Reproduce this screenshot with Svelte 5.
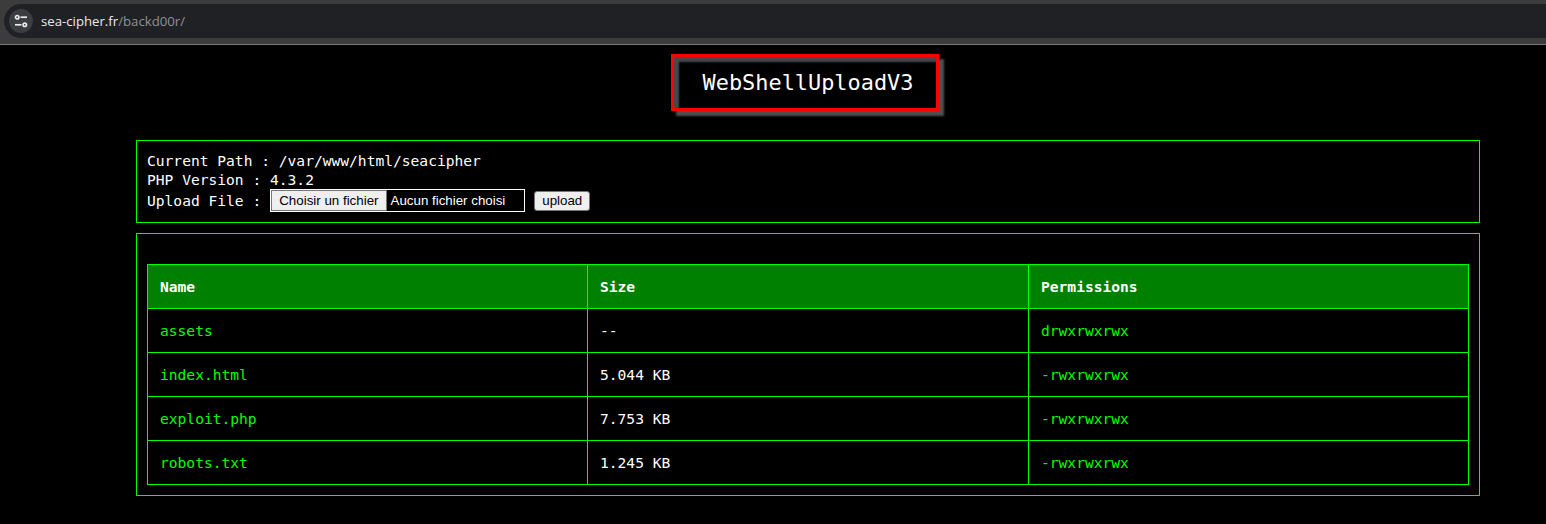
<script>
  let files = [
    { name: 'assets', size: '--', perms: 'drwxrwxrwx' },
    { name: 'index.html', size: '5.044 KB', perms: '-rwxrwxrwx' },
    { name: 'exploit.php', size: '7.753 KB', perms: '-rwxrwxrwx' },
    { name: 'robots.txt', size: '1.245 KB', perms: '-rwxrwxrwx' }
  ];
</script>

<div class="toolbar">
  <div class="omnibox">
    <span class="tune">
      <svg width="14" height="14" viewBox="0 0 14 14" fill="none" stroke="#e8eaed" stroke-width="1.7">
        <circle cx="3.2" cy="3.2" r="1.7" />
        <path d="M6.5 3.2H13" />
        <path d="M1 10.8H7.5" />
        <circle cx="10.8" cy="10.8" r="1.7" />
      </svg>
    </span>
    <span class="url">sea-cipher.fr<span class="path">/backd00r/</span></span>
  </div>
</div>

<main class="page">
  <div class="title-row">
    <h1 class="title">WebShellUploadV3</h1>
  </div>

  <section class="panel info">
    <div>Current Path : /var/www/html/seacipher</div>
    <div>PHP Version : 4.3.2</div>
    <div class="upload">
      <span>Upload File :</span>
      <span class="file-input">
        <span class="file-btn">Choisir un fichier</span>
        <span class="file-name">Aucun fichier choisi</span>
      </span>
      <button class="upload-btn">upload</button>
    </div>
  </section>

  <section class="panel listing">
    <table>
      <thead>
        <tr>
          <th class="c-name">Name</th>
          <th class="c-size">Size</th>
          <th>Permissions</th>
        </tr>
      </thead>
      <tbody>
        {#each files as f}
          <tr>
            <td class="green">{f.name}</td>
            <td>{f.size}</td>
            <td class="green">{f.perms}</td>
          </tr>
        {/each}
      </tbody>
    </table>
  </section>
</main>

<style>
  :global(body) {
    background: #000;
    overflow: hidden;
  }

  .toolbar {
    height: 45px;
    box-sizing: border-box;
    background: #3c3c3c;
    border-bottom: 1px solid #7a7a7a;
    padding-top: 4px;
  }

  .omnibox {
    height: 34px;
    background: #202124;
    border-radius: 17px 0 0 17px;
    margin-left: 4px;
    display: flex;
    align-items: center;
    padding-left: 5px;
    gap: 8px;
  }

  .tune {
    width: 24px;
    height: 24px;
    border-radius: 50%;
    background: #3c3d40;
    display: flex;
    align-items: center;
    justify-content: center;
  }

  .url {
    font-family: "Open Sans", "Noto Sans", sans-serif;
    font-size: 13.2px;
    color: #e8eaed;
  }

  .path {
    color: #8f9194;
  }

  .page {
    padding: 9px 66px 0 136px;
    font-family: "DejaVu Sans Mono", monospace;
    font-size: 14.6px;
    color: #fff;
  }

  .title-row {
    display: flex;
    justify-content: center;
    padding-right: 6px;
    margin-bottom: 29px;
  }

  .title {
    margin: 0;
    padding: 12px 23px 12px 29px;
    border: 3px solid #f00;
    box-shadow: 5px 5px 2px #505050, inset 5px 5px 2px #484848;
    font-size: 21.9px;
    font-weight: 400;
    line-height: 27px;
  }

  .panel {
    border: 1px solid #0f0;
    padding: 10px;
  }

  .info {
    line-height: 19px;
  }

  .upload {
    display: flex;
    align-items: center;
    height: 23px;
  }

  .file-input {
    display: flex;
    align-items: center;
    width: 255px;
    height: 23px;
    box-sizing: border-box;
    margin-left: 9px;
    border: 1px solid #fff;
    font-family: "Liberation Sans", Arial, sans-serif;
    font-size: 13.33px;
  }

  .file-btn {
    height: 21px;
    line-height: 19px;
    padding: 0 7px;
    background: #efefef;
    border: 1px solid #767676;
    box-sizing: border-box;
    color: #000;
  }

  .file-name {
    margin-left: 4px;
  }

  .upload-btn {
    margin-left: 9px;
    height: 20px;
    width: 56px;
    padding: 0;
    background: #efefef;
    border: 1px solid #767676;
    border-radius: 3px;
    color: #000;
    font-family: "Liberation Sans", Arial, sans-serif;
    font-size: 13.33px;
  }

  .listing {
    margin-top: 10px;
    padding: 30px 10px 10px;
  }

  table {
    width: 100%;
    border-collapse: collapse;
    table-layout: fixed;
    font-size: 14.6px;
  }

  th,
  td {
    border: 1px solid #0f0;
    height: 44px;
    padding: 0 12px;
    text-align: left;
    box-sizing: border-box;
  }

  th {
    background: #008000;
    font-weight: 700;
  }

  .c-name {
    width: 440px;
  }

  .c-size {
    width: 441px;
  }

  .green {
    color: #0f0;
  }
</style>
